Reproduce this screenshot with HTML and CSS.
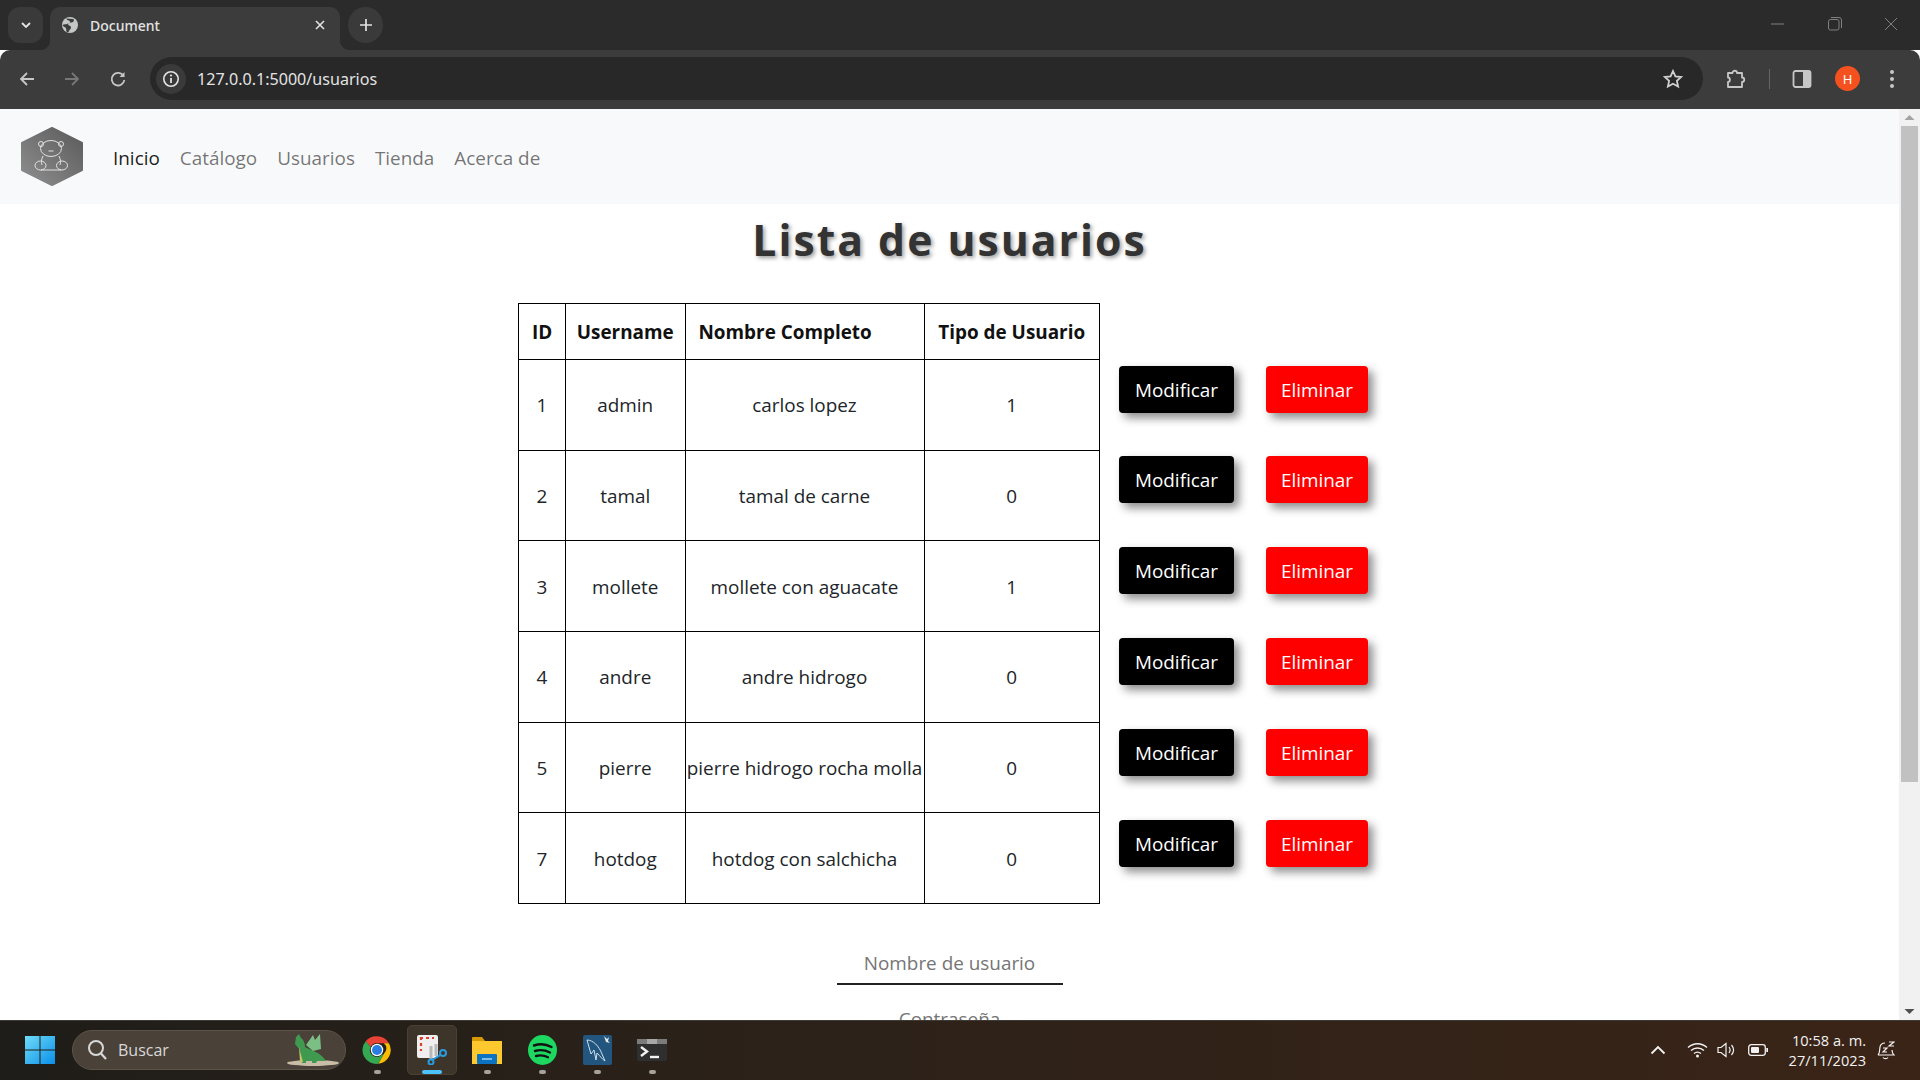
FILE: index.html
```html
<!DOCTYPE html>
<html lang="es">
<head>
<meta charset="utf-8">
<title>Document</title>
<link rel="stylesheet" href="styles.css">
</head>
<body>
<div class="tabstrip">
  <div class="tab-menu"><svg width="12" height="12" viewBox="0 0 12 12"><path d="M2 4l4 4 4-4" fill="none" stroke="#e3e3e3" stroke-width="1.8"/></svg></div>
  <div class="tab">
    <svg class="globe" width="18" height="18" viewBox="0 0 18 18"><circle cx="9" cy="9" r="8" fill="#c4c7c5"/><path d="M5 2.500c1 2 3 1.500 4 3s-2 2-3 2.500-3 0-4.500 1c1 2 3 2 3.500 3.500s0 2.500 1 4l2-1c0-2 2-2 2-4s-3-2-3-3.500 3-1 5-2c1-.5 1-2 .5-3z" fill="#3c3c3c"/></svg>
    <span class="tab-title">Document</span>
    <svg class="tab-close" width="12" height="12" viewBox="0 0 12 12"><path d="M2 2l8 8M10 2l-8 8" stroke="#e3e3e3" stroke-width="1.600"/></svg>
  </div>
  <div class="tab-new"><svg width="14" height="14" viewBox="0 0 14 14"><path d="M7 1v12M1 7h12" stroke="#e3e3e3" stroke-width="1.700"/></svg></div>
  <div class="window-controls">
    <svg width="14" height="14" viewBox="0 0 14 14"><path d="M0 7h13" stroke="#808080"/></svg>
    <svg width="14" height="14" viewBox="0 0 14 14"><rect x=".5" y="2.500" width="10.500" height="10.500" rx="2" fill="none" stroke="#808080"/><path d="M3 .5h8a2.500 2.500 0 0 1 2.500 2.500v8" fill="none" stroke="#808080"/></svg>
    <svg width="14" height="14" viewBox="0 0 14 14"><path d="M1 1l12 12M13 1l-12 12" stroke="#808080"/></svg>
  </div>
</div>
<div class="toolbar">
  <svg class="nav-back" width="18" height="18" viewBox="0 0 18 18"><path d="M16 9H3M9 3L3 9l6 6" fill="none" stroke="#c7c7c7" stroke-width="1.800"/></svg>
  <svg class="nav-fwd" width="18" height="18" viewBox="0 0 18 18"><path d="M2 9h13M9 3l6 6-6 6" fill="none" stroke="#777" stroke-width="1.800"/></svg>
  <svg class="nav-reload" width="18" height="18" viewBox="0 0 18 18"><path d="M14.500 6A6.300 6.300 0 1 0 15.300 10" fill="none" stroke="#c7c7c7" stroke-width="1.800"/><path d="M15.500 2v5h-5z" fill="#c7c7c7"/></svg>
  <div class="omnibox">
    <div class="site-info"><svg width="18" height="18" viewBox="0 0 18 18"><circle cx="9" cy="9" r="7.200" fill="none" stroke="#e3e3e3" stroke-width="1.600"/><path d="M9 8v5" stroke="#e3e3e3" stroke-width="1.800"/><circle cx="9" cy="5.500" r="1.100" fill="#e3e3e3"/></svg></div>
    <span class="url">127.0.0.1:5000/usuarios</span>
    <svg class="star" width="20" height="20" viewBox="0 0 20 20"><path d="M10 2l2.400 5.400 5.800.6-4.300 3.900 1.200 5.700L10 14.700l-5.100 2.900 1.200-5.700L1.800 8l5.800-.6z" fill="none" stroke="#d0d0d0" stroke-width="1.800"/></svg>
  </div>
  <svg class="tb-ext" width="22" height="22" viewBox="0 0 22 22"><path d="M3 5h4.500c0-3 4.500-3 4.500 0h5v4.500c3 0 3 4.500 0 4.500v5H3v-5c2.500 0 2.500-4.500 0-4.500z" fill="none" stroke="#c7c7c7" stroke-width="1.800" stroke-linejoin="round"/></svg>
  <div class="tb-divider"></div>
  <svg class="tb-side" width="20" height="20" viewBox="0 0 20 20"><rect x="1.500" y="2" width="17" height="16" rx="2" fill="none" stroke="#c7c7c7" stroke-width="1.800"/><rect x="11" y="2" width="7.500" height="16" fill="#c7c7c7"/></svg>
  <div class="avatar">H</div>
  <svg class="tb-menu" width="6" height="20" viewBox="0 0 6 20"><circle cx="3" cy="3" r="2" fill="#c7c7c7"/><circle cx="3" cy="10" r="2" fill="#c7c7c7"/><circle cx="3" cy="17" r="2" fill="#c7c7c7"/></svg>
</div>
<div class="viewport">
  <main class="page">
    <nav class="navbar">
      <svg class="logo" width="64" height="59" viewBox="0 0 64 59">
        <defs><linearGradient id="hex" x1="0" y1="1" x2="1" y2="0"><stop offset="0" stop-color="#8f8f8f"/><stop offset="1" stop-color="#5a5a5a"/></linearGradient></defs>
        <path d="M32 1L62 16v27L32 58 2 43V16z" fill="url(#hex)" stroke="url(#hex)" stroke-width="2" stroke-linejoin="round"/>
        <g fill="none" stroke="#ececec" stroke-width=".9">
          <circle cx="21" cy="17" r="2.500"/><circle cx="41" cy="17" r="2.500"/>
          <ellipse cx="31" cy="21.500" rx="10.500" ry="8"/><path d="M28.500 24h5"/>
          <path d="M23 29c-1.500 3-2 6-1 9M39 29c1.500 3 2 6 1 9M21 43h20"/>
          <ellipse cx="20.500" cy="38.500" rx="5.500" ry="4.500"/><ellipse cx="42" cy="38.500" rx="5.500" ry="4.500"/>
        </g>
      </svg>
      <a class="nav-link active">Inicio</a>
      <a class="nav-link">Catálogo</a>
      <a class="nav-link">Usuarios</a>
      <a class="nav-link">Tienda</a>
      <a class="nav-link">Acerca de</a>
    </nav>
    <h1 class="title">Lista de usuarios</h1>
    <section class="users">
      <table class="user-table">
        <colgroup><col class="c-id"><col class="c-user"><col class="c-name"><col class="c-type"></colgroup>
        <thead><tr><th>ID</th><th>Username</th><th class="left">Nombre Completo</th><th>Tipo de Usuario</th></tr></thead>
        <tbody>
          <tr><td>1</td><td>admin</td><td>carlos lopez</td><td>1</td></tr>
          <tr><td>2</td><td>tamal</td><td>tamal de carne</td><td>0</td></tr>
          <tr><td>3</td><td>mollete</td><td>mollete con aguacate</td><td>1</td></tr>
          <tr><td>4</td><td>andre</td><td>andre hidrogo</td><td>0</td></tr>
          <tr><td>5</td><td>pierre</td><td>pierre hidrogo rocha molla</td><td>0</td></tr>
          <tr><td>7</td><td>hotdog</td><td>hotdog con salchicha</td><td>0</td></tr>
        </tbody>
      </table>
      <div class="actions">
        <div class="action-row"><button class="btn btn-edit">Modificar</button><button class="btn btn-del">Eliminar</button></div>
        <div class="action-row"><button class="btn btn-edit">Modificar</button><button class="btn btn-del">Eliminar</button></div>
        <div class="action-row"><button class="btn btn-edit">Modificar</button><button class="btn btn-del">Eliminar</button></div>
        <div class="action-row"><button class="btn btn-edit">Modificar</button><button class="btn btn-del">Eliminar</button></div>
        <div class="action-row"><button class="btn btn-edit">Modificar</button><button class="btn btn-del">Eliminar</button></div>
        <div class="action-row"><button class="btn btn-edit">Modificar</button><button class="btn btn-del">Eliminar</button></div>
      </div>
    </section>
    <form class="form">
      <input class="field" placeholder="Nombre de usuario">
      <input class="field" placeholder="Contraseña">
    </form>
  </main>
  <div class="scrollbar">
    <svg width="21" height="17" viewBox="0 0 21 17"><path d="M5.500 11l5-5 5 5z" fill="#a3a3a3"/></svg>
    <div class="thumb-track"><div class="thumb"></div></div>
    <svg width="21" height="17" viewBox="0 0 21 17"><path d="M5.500 6l5 5 5-5z" fill="#505050"/></svg>
  </div>
</div>
<footer class="taskbar">
  <svg class="win" width="30" height="30" viewBox="0 0 30 30"><defs><linearGradient id="w" x1="0" y1="0" x2="1" y2="1"><stop offset="0" stop-color="#6fdcf8"/><stop offset="1" stop-color="#0a8fe8"/></linearGradient></defs><path d="M0 1h14.500v13.500H0zM15.500 1H30v13.500H15.500zM0 15.500h14.500V29H0zM15.500 15.500H30V29H15.500z" fill="url(#w)"/></svg>
  <div class="search">
    <svg width="20" height="22" viewBox="0 0 20 22"><circle cx="9" cy="9" r="7" fill="none" stroke="#d8d8d8" stroke-width="2"/><path d="M14 14.500l5 5.500" stroke="#d8d8d8" stroke-width="2.200"/></svg>
    <span class="search-text">Buscar</span>
    <svg class="dragon" width="52" height="32" viewBox="0 0 52 32"><ellipse cx="26" cy="29" rx="26" ry="3" fill="#c9bda8"/><path d="M9 3l3-3 2 4c3 2 4 6 4 9l6 3c6 2 11 5 15 11h-9l-1 2h-4v-2h-6v2h-4l-2-13-5-6z" fill="#3f9a50"/><path d="M19 11l7-10 2 5 5-6 1 15-8 2z" fill="#7cbf84"/><path d="M12 13l4 15h-3z" fill="#c6c46a"/></svg>
  </div>
  <div class="apps">
    <div class="app">
      <svg width="30" height="30" viewBox="0 0 48 48"><path d="M24 2a22 22 0 0 1 19 11H24a11 11 0 0 0-10 6L6 10A22 22 0 0 1 24 2z" fill="#ea4335"/><path d="M43 13a22 22 0 0 1-17 33l9-16a11 11 0 0 0 0-17z" fill="#fbbc04"/><path d="M26 46A22 22 0 0 1 6 10l8 9a11 11 0 0 0 12 16l9-5z" fill="#34a853"/><circle cx="24" cy="24" r="10" fill="#fff"/><circle cx="24" cy="24" r="8" fill="#2a7de1"/></svg>
      <span class="pip"></span>
    </div>
    <div class="app app-active">
      <svg width="30" height="30" viewBox="0 0 30 30"><rect x="0" y="0" width="21" height="23" rx="2" fill="#f0eeee"/><path d="M4 5V3h2M9 3h3M15 3h2M4 8v3M4 14v2" stroke="#d8412c" stroke-width="2.200" fill="none"/><path d="M14 11v13M19 9v12" stroke="#b8b8b8" stroke-width="3" fill="none"/><circle cx="26" cy="18" r="3" fill="none" stroke="#2b9be0" stroke-width="2"/><circle cx="14" cy="27" r="2.500" fill="none" stroke="#2b9be0" stroke-width="2"/><path d="M23.500 20L15 25" stroke="#2b9be0" stroke-width="2"/></svg>
      <span class="pip pip-active"></span>
    </div>
    <div class="app">
      <svg width="30" height="30" viewBox="0 0 30 30"><path d="M0 3a1 1 0 0 1 1-1h9l3 4H0z" fill="#d89a00"/><path d="M0 6h30v23H0z" fill="#fdc92f"/><rect x="5" y="19" width="20" height="10" rx="1" fill="#0c73c2"/><path d="M10 24h10" stroke="#9ed4f5" stroke-width="1.500"/></svg>
      <span class="pip"></span>
    </div>
    <div class="app">
      <svg width="29" height="30" viewBox="0 0 29 30"><ellipse cx="14.500" cy="15" rx="14.500" ry="15" fill="#1ed760"/><path d="M6 10.500c6-2 12-1.500 17.500 1.500M7 16c5-1.500 10-1 15 1.500M8 21c4-1 8-.8 12 1.200" fill="none" stroke="#111" stroke-width="2.400" stroke-linecap="round"/></svg>
      <span class="pip"></span>
    </div>
    <div class="app">
      <svg width="29" height="30" viewBox="0 0 29 30"><rect width="29" height="30" rx="2" fill="#22567f"/><path d="M4 5c6 0 12 6 15 14l3 7c-3-2-5-5-8-8l-1 7-2-10-3 4z" fill="none" stroke="#cfdfea" stroke-width="1"/><path d="M21 1l3 3 2-2-1 4 2 2-4-1z" fill="#e8e8e8"/></svg>
      <span class="pip"></span>
    </div>
    <div class="app">
      <svg width="30" height="30" viewBox="0 0 30 30"><rect y="4" width="30" height="22" rx="2" fill="#2f2f2f"/><rect y="4" width="30" height="5" fill="#7c7c7c"/><rect x="10" y="4" width="10" height="5" fill="#a8a8a8"/><path d="M4 12l6 4.500-6 4.500" fill="none" stroke="#f2f2f2" stroke-width="2.400"/><path d="M13 22h9" stroke="#f2f2f2" stroke-width="2.400"/></svg>
      <span class="pip"></span>
    </div>
  </div>
  <div class="tray">
    <svg class="t-chev" width="16" height="10" viewBox="0 0 16 10"><path d="M1.500 8.500L8 2l6.500 6.500" fill="none" stroke="#f2f2f2" stroke-width="1.800"/></svg>
    <svg class="t-wifi" width="21" height="16" viewBox="0 0 21 16"><path d="M1 5.500c5.500-5 13.500-5 19 0M4 8.500c3.800-3.300 9.200-3.300 13 0M7 11.500c2.200-1.700 4.800-1.700 7 0" fill="none" stroke="#f2f2f2" stroke-width="1.400"/><circle cx="10.500" cy="14" r="1.500" fill="#f2f2f2"/></svg>
    <svg class="t-vol" width="20" height="18" viewBox="0 0 20 18"><path d="M1 6.500h3L9 2.500v13l-5-4H1z" fill="none" stroke="#f2f2f2" stroke-width="1.200"/><path d="M12 6c1.500 2 1.500 4 0 6M14.500 4c2.500 3 2.500 7 0 10" fill="none" stroke="#f2f2f2" stroke-width="1.200"/></svg>
    <svg class="t-bat" width="20" height="12" viewBox="0 0 20 12"><rect x=".7" y=".7" width="16.600" height="10.600" rx="2.500" fill="none" stroke="#f2f2f2" stroke-width="1.300"/><rect x="3" y="3" width="8" height="6" rx="1" fill="#f2f2f2"/><rect x="18.300" y="4" width="1.700" height="4" fill="#f2f2f2"/></svg>
    <div class="clock"><span>10:58 a. m.</span><span>27/11/2023</span></div>
    <svg class="t-bell" width="18" height="20" viewBox="0 0 18 20"><path d="M1 15c2-2 1.500-5 2-8s3-4 5-4M15 10c0 2 .5 3.500 2 5H1M6 17.500c1 1.500 4 1.500 5 0" fill="none" stroke="#f2f2f2" stroke-width="1.200"/><path d="M6 8h4l-4 4h4M12 2h5l-5 4h5" fill="none" stroke="#f2f2f2" stroke-width="1.200"/></svg>
  </div>
</footer>
</body>
</html>
```
FILE: styles.css
```css
* { box-sizing: border-box; }
html, body { margin: 0; height: 100%; overflow: hidden; }
body {
  display: flex;
  flex-direction: column;
  height: 100vh;
  font-family: "Open Sans", "Noto Sans", sans-serif;
  background: #fff;
}

/* browser chrome */
.tabstrip {
  display: flex;
  align-items: flex-start;
  height: 50px;
  padding-top: 7px;
  padding-left: 8px;
  background: #2b2b2b;
  flex: none;
}
.tab-menu, .tab-new {
  width: 35px;
  height: 36px;
  border-radius: 12px;
  background: #3a3a3a;
  display: flex;
  align-items: center;
  justify-content: center;
}
.tab {
  position: relative;
  width: 290px;
  height: 43px;
  margin-left: 7px;
  padding: 0 14px 7px 11px;
  border-radius: 10px 10px 0 0;
  background: #3c3c3c;
  display: flex;
  align-items: center;
}
.tab::before, .tab::after {
  content: "";
  position: absolute;
  bottom: 0;
  width: 10px;
  height: 10px;
}
.tab::before { left: -10px; background: radial-gradient(circle at 0 0, transparent 10px, #3c3c3c 10.500px); }
.tab::after { right: -10px; background: radial-gradient(circle at 100% 0, transparent 10px, #3c3c3c 10.500px); }
.tab-title {
  margin-left: 11px;
  font-family: "Noto Sans", sans-serif;
  font-size: 14px;
  font-weight: 500;
  color: #e3e3e3;
  flex: 1;
}
.tab-new { margin-left: 8px; border-radius: 18px; }
.window-controls {
  margin-left: auto;
  display: flex;
  align-items: center;
  gap: 42.500px;
  height: 34px;
  padding-right: 22px;
}
.toolbar {
  display: flex;
  align-items: center;
  height: 59px;
  flex: none;
  background: #3c3c3c;
  border-radius: 10px 10px 0 0;
  padding: 0 22px 2px 18px;
}
.nav-fwd { margin-left: 27px; }
.nav-reload { margin-left: 28px; }
.omnibox {
  margin-left: 23px;
  width: 1553px;
  height: 43px;
  border-radius: 22px;
  background: #282828;
  display: flex;
  align-items: center;
  padding: 0 20px 0 6px;
}
.site-info {
  width: 30px;
  height: 30px;
  border-radius: 50%;
  background: #3a3a3a;
  display: flex;
  align-items: center;
  justify-content: center;
}
.url {
  margin-left: 11px;
  font-family: "Noto Sans", sans-serif;
  font-size: 16.100px;
  color: #e3e3e3;
  flex: 1;
}
.tb-ext { margin-left: 22px; }
.tb-divider { width: 1px; height: 20px; margin-left: 22px; background: #666; }
.tb-side { margin-left: 22px; }
.avatar {
  width: 25px;
  height: 25px;
  margin-left: 23px;
  border-radius: 50%;
  background: #f4511e;
  color: #fff;
  font-family: "Noto Sans", sans-serif;
  font-size: 13px;
  display: flex;
  align-items: center;
  justify-content: center;
}
.tb-menu { margin-left: 29px; }

/* page */
.viewport { flex: 1; min-height: 0; display: flex; }
.page { flex: 1; min-width: 0; overflow: hidden; }
.scrollbar {
  width: 21px;
  flex: none;
  background: #f1f1f1;
  display: flex;
  flex-direction: column;
}
.thumb-track { flex: 1; padding: 0 2px; }
.thumb { height: 656px; background: #c1c1c1; }
.navbar {
  height: 95px;
  background: #f8f9fa;
  display: flex;
  align-items: center;
  padding-left: 20px;
}
.logo { margin-right: 19px; }
.nav-link {
  padding: 2px 10px 0;
  font-size: 18.900px;
  color: rgba(0, 0, 0, .55);
}
.nav-link.active { color: rgba(0, 0, 0, .9); }
.title {
  margin: 9px 0 0;
  height: 90px;
  text-align: center;
  font-size: 42.700px;
  line-height: 54px;
  font-weight: 700;
  letter-spacing: 2px;
  color: #333;
  text-shadow: 2px 2px 4px rgba(0, 0, 0, .4);
}
.users {
  width: 863px;
  margin: 0 auto;
  display: flex;
  align-items: flex-start;
}
.user-table {
  width: 581px;
  flex: none;
  table-layout: fixed;
  border-collapse: collapse;
  font-size: 18.900px;
  color: #212529;
}
.c-id { width: 47px; }
.c-user { width: 119.500px; }
.c-name { width: 239px; }
.c-type { width: 175.500px; }
.user-table th, .user-table td {
  border: 1px solid #000;
  text-align: center;
  padding: 0;
  white-space: nowrap;
}
.user-table th { height: 56px; font-weight: 700; color: #111; }
.user-table th.left { text-align: left; padding-left: 13px; }
.user-table td { height: 90.700px; padding-top: 1px; }
.actions {
  margin-left: 19px;
  padding-top: 62.700px;
  display: flex;
  flex-direction: column;
  gap: 43.800px;
}
.action-row { display: flex; gap: 32px; }
.btn {
  height: 47px;
  padding: 1px 0 0;
  border: 0;
  border-radius: 4px;
  font-family: inherit;
  font-size: 18.900px;
  color: #fff;
  box-shadow: 5px 5px 10px rgba(0, 0, 0, .45);
}
.btn-edit { width: 115px; background: #000; }
.btn-del { width: 102px; background: #f00; }
.form {
  margin-top: 43.600px;
  display: flex;
  flex-direction: column;
  align-items: center;
  gap: 19px;
}
.field {
  width: 226px;
  height: 37px;
  padding: 0 0 5px;
  border: 0;
  border-bottom: 2px solid #222;
  background: none;
  text-align: center;
  font-family: inherit;
  font-size: 18.900px;
  outline: none;
}
.field::placeholder { color: #757575; }

/* taskbar */
.taskbar {
  height: 60px;
  flex: none;
  display: flex;
  align-items: center;
  padding: 0 0 1px 25px;
  background: linear-gradient(90deg, #1f1d19 0%, #2a2119 35%, #3a2417 100%);
  border-top: 1px solid #3e3a35;
  color: #f2f2f2;
}
.search {
  width: 274px;
  height: 40px;
  margin-left: 17px;
  padding: 0 6px 0 14px;
  border-radius: 20px;
  background: #4a4238;
  border: 1px solid #5b5348;
  display: flex;
  align-items: center;
}
.search-text {
  margin-left: 11px;
  flex: 1;
  font-size: 16px;
  color: #d8d8d8;
}
.apps { display: flex; margin-left: 6px; gap: 5px; }
.app {
  width: 50px;
  height: 50px;
  border-radius: 5px;
  border: 1px solid transparent;
  display: flex;
  flex-direction: column;
  align-items: center;
  padding-top: 9px;
  gap: 5px;
}
.app-active { background: #3d342a; border-color: #493f34; }
.pip { width: 7px; height: 4px; border-radius: 2px; background: #a5a29e; flex: none; }
.pip-active { width: 20px; background: #4cc2ff; }
.tray { margin-left: auto; display: flex; align-items: center; padding-right: 25px; }
.t-wifi { margin-left: 21px; }
.t-vol { margin-left: 9px; }
.t-bat { margin-left: 11px; }
.clock {
  margin-left: 10px;
  width: 88px;
  display: flex;
  flex-direction: column;
  align-items: flex-end;
  font-size: 14.600px;
  line-height: 20px;
}
.t-bell { margin-left: 11px; }
```
